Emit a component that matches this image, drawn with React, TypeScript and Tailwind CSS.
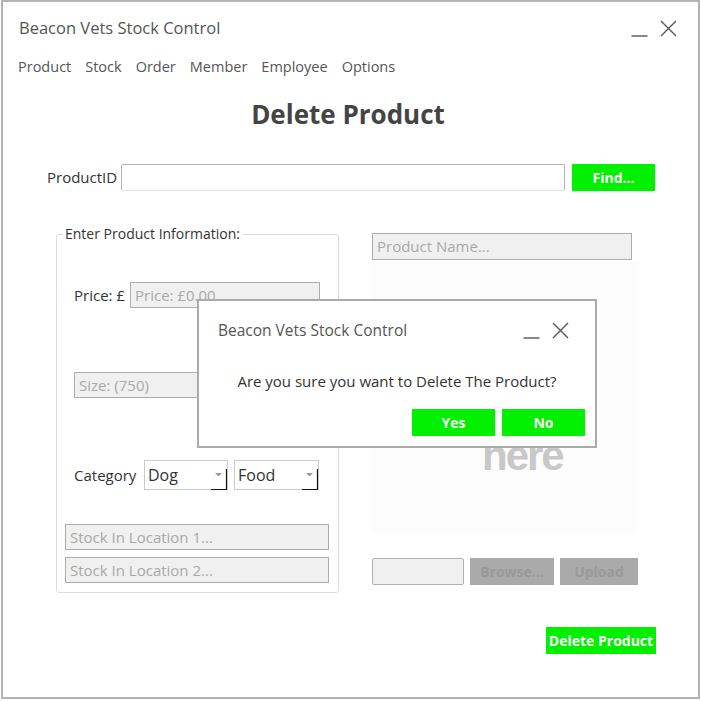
import React from "react";

const GREEN = "bg-[#00f000]";

function Minimize() {
  return (
    <svg width="17" height="17" viewBox="0 0 17 17" className="block">
      <line x1="0.5" y1="16" x2="16.5" y2="16" stroke="#555" strokeWidth="1.4" />
    </svg>
  );
}

function CloseX() {
  return (
    <svg width="17" height="17" viewBox="0 0 17 17" className="block">
      <path d="M1 1 L16 16 M16 1 L1 16" stroke="#555" strokeWidth="1.4" fill="none" />
    </svg>
  );
}

function GreyInput({ placeholder, className }: { placeholder: string; className: string }) {
  return (
    <div
      className={`flex items-center h-[26px] bg-[#f0f0f0] border border-[#adadad] pl-[4px] text-[15px] text-[#a9a9a9] whitespace-nowrap overflow-hidden ${className}`}
    >
      {placeholder}
    </div>
  );
}

function Dropdown({ value, className }: { value: string; className: string }) {
  return (
    <div
      className={`flex items-center justify-between h-[30px] bg-white border border-[#cacaca] pl-[3px] text-[16px] text-[#333] ${className}`}
    >
      <span>{value}</span>
      <svg width="16" height="29" viewBox="0 0 16 29" className="block">
        <path d="M4 12 L11 12 L7.5 15.5 Z" fill="#9a9a9a" />
        <path d="M0 28.5 L15.5 28.5 L15.5 8" stroke="#111" strokeWidth="1.2" fill="none" />
      </svg>
    </div>
  );
}

export default function App() {
  return (
    <div className="relative w-[701px] h-[701px] bg-white font-['Open_Sans',sans-serif] overflow-hidden">
      {/* Main window */}
      <div className="ml-[1px] w-[699px] h-[699px] border-2 border-[#b4b4b4] flex flex-col">
        {/* Title bar */}
        <div className="flex items-center justify-between h-[52px] pl-[16px] pr-[21px]">
          <span className="text-[16.5px] text-[#555]">Beacon Vets Stock Control</span>
          <div className="flex items-center gap-[12px] pt-[1px]">
            <Minimize />
            <CloseX />
          </div>
        </div>

        {/* Menu */}
        <nav className="flex items-center gap-[14px] h-[26px] pl-[15px] text-[14.5px] text-[#555]">
          <span>Product</span>
          <span>Stock</span>
          <span>Order</span>
          <span>Member</span>
          <span>Employee</span>
          <span>Options</span>
        </nav>

        <h1 className="mt-[16px] h-[36px] leading-[36px] text-center pr-[5px] text-[26px] font-bold text-[#444]">
          Delete Product
        </h1>

        {/* Product ID row */}
        <div className="mt-[32px] flex items-center pl-[44px]">
          <span className="text-[15px] text-[#333] w-[74px]">ProductID</span>
          <div className="w-[444px] h-[27px] bg-white border border-[#b3b3b3] border-b-[#dfe5ec] rounded-[2px]" />
          <button className={`ml-[7px] w-[83px] h-[27px] ${GREEN} text-white font-bold text-[14px]`}>
            Find...
          </button>
        </div>

        {/* Main area */}
        <div className="mt-[33px] flex pl-[53px]">
          <fieldset className="w-[283px] h-[369px] border border-[#d5dde5] rounded-[3px]">
            <legend className="ml-[6px] px-[2px] text-[14px] leading-[20px] text-[#333]">
              Enter Product Information:
            </legend>

            <div className="pl-[17px]">
              <div className="mt-[38px] flex items-center">
                <span className="w-[56px] text-[15px] text-[#333]">Price: £</span>
                <GreyInput placeholder="Price: £0.00" className="w-[190px]" />
              </div>

              <GreyInput placeholder="Size: (750)" className="mt-[64px] w-[246px]" />

              <div className="mt-[62px] flex items-center">
                <span className="w-[70px] text-[15px] text-[#333]">Category</span>
                <Dropdown value="Dog" className="w-[84px]" />
                <Dropdown value="Food" className="ml-[6px] w-[85px]" />
              </div>

              <div className="mt-[34px] -ml-[9px] flex flex-col gap-[7px]">
                <GreyInput placeholder="Stock In Location 1..." className="w-[264px]" />
                <GreyInput placeholder="Stock In Location 2..." className="w-[264px]" />
              </div>
            </div>
          </fieldset>

          <div className="ml-[33px] flex flex-col">
            <GreyInput placeholder="Product Name..." className="mt-[9px] w-[260px] h-[27px]" />
            <div className="mt-[2px] w-[266px] h-[271px] bg-[#fcfcfc] pl-[110px] pt-[179px]">
              <div className="font-['Liberation_Sans',sans-serif] font-bold text-[42px] leading-[30px] tracking-[-2px] text-[#c8c8c8]">
                here
              </div>
            </div>
            <div className="mt-[25px] flex items-center gap-[6px]">
              <div className="w-[92px] h-[27px] bg-[#f0f0f0] border border-[#b0b0b0] rounded-[2px]" />
              <button className="w-[84px] h-[27px] bg-[#aaaaaa] text-[#999] font-bold text-[14px]">
                Browse...
              </button>
              <button className="w-[78px] h-[27px] bg-[#aaaaaa] text-[#999] font-bold text-[14px]">
                Upload
              </button>
            </div>
          </div>
        </div>

        <div className="mt-[34px] flex justify-end pr-[42px]">
          <button className={`w-[110px] h-[27px] ${GREEN} text-white font-bold text-[14px]`}>
            Delete Product
          </button>
        </div>
      </div>

      {/* Confirmation dialog */}
      <div className="absolute left-[197px] top-[299px] w-[400px] h-[149px] bg-white border-2 border-[#ababab] flex flex-col">
        <div className="flex items-start justify-between pl-[19px] pr-[26px] pt-[18px]">
          <span className="text-[15.5px] text-[#555]">Beacon Vets Stock Control</span>
          <div className="flex items-center gap-[12px] pt-[3px]">
            <Minimize />
            <CloseX />
          </div>
        </div>
        <p className="mt-[29px] text-center text-[15px] leading-[20px] text-[#333]">
          Are you sure you want to Delete The Product?
        </p>
        <div className="mt-[18px] flex justify-end gap-[7px] pr-[10px]">
          <button className={`w-[83px] h-[27px] ${GREEN} text-white font-bold text-[14px]`}>Yes</button>
          <button className={`w-[83px] h-[27px] ${GREEN} text-white font-bold text-[14px]`}>No</button>
        </div>
      </div>
    </div>
  );
}
